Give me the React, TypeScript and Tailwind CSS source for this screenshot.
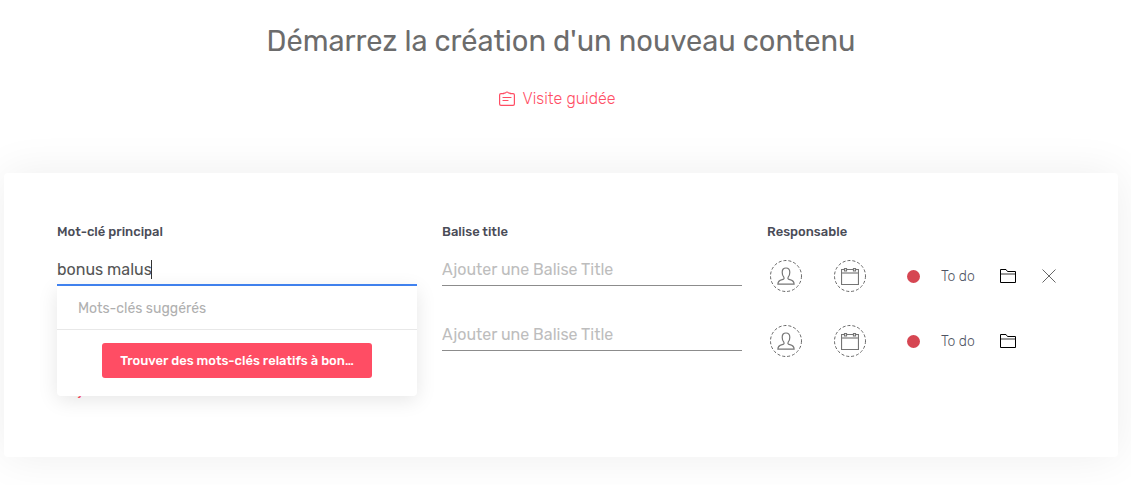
import type { ReactNode } from "react";

function ClipboardIcon() {
	return (
		<svg width="16" height="16" viewBox="0 0 16 16" fill="none" stroke="currentColor" aria-hidden="true">
			<path d="M5 2.6H2Q.6 2.6 .6 4V13Q.6 14.4 2 14.4H14Q15.4 14.4 15.4 13V4Q15.4 2.6 14 2.6H11" strokeWidth="1.2" />
			<path d="M5 3V2H6.4Q8 0 9.6 2H11V3" strokeWidth="1.2" />
			<path d="M4 6.5H12M4 9.5H9" strokeWidth="1.2" strokeLinecap="round" />
		</svg>
	);
}

function PersonIcon() {
	return (
		<svg width="18" height="18" viewBox="0 0 18 18" fill="none" stroke="#757575" strokeWidth="1.2" aria-hidden="true">
			<path d="M.9 17.2C.9 14.2 2.4 13.4 5.2 12.7C7.2 12.2 7.4 11.5 6.8 10.2C5.6 9 5.2 7.4 5.2 5.2C5.2 2.2 6.6 1 9 1S12.8 2.2 12.8 5.2C12.8 7.4 12.4 9 11.2 10.2C10.6 11.5 10.8 12.2 12.8 12.7C15.6 13.4 17.1 14.2 17.1 17.2Z" />
		</svg>
	);
}

function CalendarIcon() {
	return (
		<svg width="18" height="18" viewBox="0 0 18 18" fill="none" stroke="#757575" strokeWidth="1.2" aria-hidden="true">
			<path d="M3.5 2.5H.5V17.5H17.5V2.5H14.5M5.5 2.5H12.5" />
			<path d="M3.5 1.5H5.5V4H3.5ZM12.5 1.5H14.5V4H12.5Z" />
			<path d="M1 6H17" stroke="#b0b0b0" strokeWidth="2" />
		</svg>
	);
}

function FolderIcon() {
	return (
		<svg width="16" height="14" viewBox="0 0 16 14" fill="none" stroke="#000" aria-hidden="true">
			<path d="M.5 13.5V.5H6L7.5 2.5H15.5V13.5Z" />
			<path d="M1 5H15" stroke="#999" strokeWidth="2" />
		</svg>
	);
}

function CloseIcon() {
	return (
		<svg width="14" height="14" viewBox="0 0 14 14" fill="none" stroke="#666" aria-hidden="true">
			<path d="M.5.5L13.5 13.5M13.5.5L.5 13.5" />
		</svg>
	);
}

function RoundButton({ label, children }: { label: string; children: ReactNode }) {
	return (
		<button
			type="button"
			aria-label={label}
			className="relative flex h-8 w-8 shrink-0 items-center justify-center rounded-full"
		>
			<svg className="absolute inset-0" width="32" height="32" viewBox="0 0 32 32" fill="none" aria-hidden="true">
				<circle cx="16" cy="16" r="15.5" stroke="#666" strokeDasharray="3 2" />
			</svg>
			{children}
		</button>
	);
}

function RowActions({ removable = false }: { removable?: boolean }) {
	return (
		<div className="mt-1.5 flex h-8 items-center pl-[3px]">
			<RoundButton label="Responsable">
				<PersonIcon />
			</RoundButton>
			<div className="ml-8">
				<RoundButton label="Date">
					<CalendarIcon />
				</RoundButton>
			</div>
			<button type="button" className="ml-[41px] flex items-center gap-[21px]">
				<span className="h-[13px] w-[13px] rounded-full bg-[#d64652]" />
				<span className="w-[34px] whitespace-nowrap pt-0.5 text-left text-sm font-light text-[#4f5463]">To do</span>
			</button>
			<button type="button" aria-label="Dossier" className="ml-[25px]">
				<FolderIcon />
			</button>
			{removable && (
				<button type="button" aria-label="Supprimer" className="ml-[26px]">
					<CloseIcon />
				</button>
			)}
		</div>
	);
}

const columns = "grid grid-cols-[360fr_300fr_298fr] gap-x-[25px]";
const field =
	"block h-8 w-full border-b border-[#8c8c8c] bg-transparent text-base text-[#555] outline-none placeholder:text-[#bdbdbd]";

export default function App() {
	return (
		<main className="ml-1 mr-[13px] pb-7 pt-[23px] font-['Rubik','Roboto',sans-serif]">
			<h1 className="text-center text-[29px] leading-9 text-[#6c6c6c]">
				Démarrez la création d'un nouveau contenu
			</h1>
			<div className="mt-7 flex justify-center">
				<a href="#visite" className="flex items-center gap-2 pr-2 text-base font-light text-[#ff4d64]">
					<ClipboardIcon />
					Visite guidée
				</a>
			</div>

			<form className="mt-[62px] rounded bg-white px-[53px] pb-14 pt-12 shadow-[0_0_45px_rgba(0,0,0,0.07)]">
				<div className={`${columns} pt-px text-[13px] leading-5 font-medium text-[#4a4c57]`}>
					<label htmlFor="keyword-1">Mot-clé principal</label>
					<label htmlFor="title-1">Balise title</label>
					<span>Responsable</span>
				</div>

				<div className={`${columns} mt-3`}>
					<div className="relative">
						<input
							id="keyword-1"
							defaultValue="bonus malus"
							className="block h-8 w-full border-b-2 border-[#4285f4] bg-transparent text-base text-[#555] caret-transparent outline-none"
						/>
						<div className="pointer-events-none absolute left-0 top-1.5 h-[19px] w-[95px] border-r border-[#333]" />
						<div className="absolute inset-x-0 top-full z-10 -mt-1.5 rounded-b bg-white shadow-[0_4px_20px_rgba(0,0,0,0.1)]">
							<p className="border-b border-[#e8e8e8] pb-[11px] pt-[13px] pl-[21px] text-sm leading-[19px] text-[#b0b0b0]">
								Mots-clés suggérés
							</p>
							<div className="flex justify-center pb-[18px] pt-[13px]">
								<button
									type="button"
									className="h-[35px] w-3/4 whitespace-nowrap rounded-[3px] bg-[#ff4d64] text-[13px] font-medium text-white"
								>
									Trouver des mots-clés relatifs à bon…
								</button>
							</div>
						</div>
					</div>
					<div>
						<input id="title-1" placeholder="Ajouter une Balise Title" className={field} />
					</div>
					<RowActions removable />
				</div>

				<div className={`${columns} mt-[27px]`}>
					<div>
						<input aria-label="Mot-clé principal" className={field} />
					</div>
					<div>
						<input aria-label="Balise title" placeholder="Ajouter une Balise Title" className={field} />
					</div>
					<RowActions />
				</div>

				<a href="#ajouter" className="mt-6 block w-fit text-sm leading-5 text-[#ff4d64]">
					+ Ajouter un mot-clé
				</a>
			</form>
		</main>
	);
}
